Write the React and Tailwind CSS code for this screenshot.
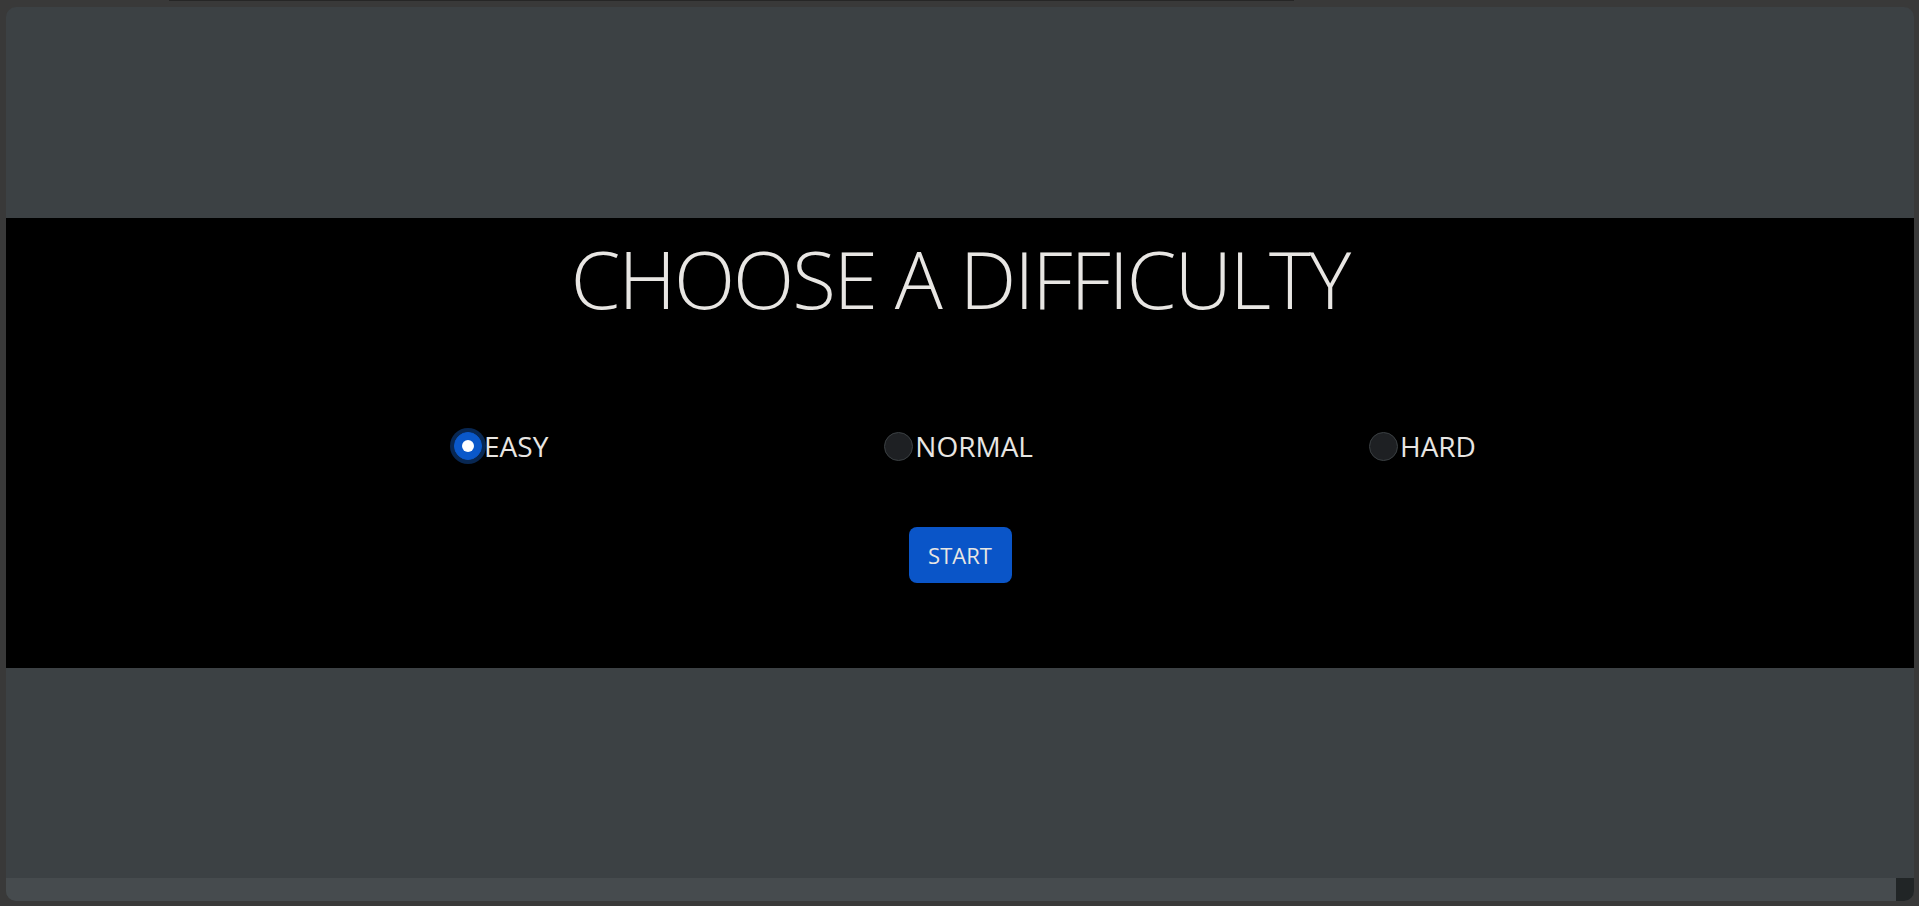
import { useState } from 'react';

const levels = ['EASY', 'NORMAL', 'HARD'];

function Radio({ label, checked, onSelect }) {
  return (
    <label className="flex cursor-pointer items-center gap-[2px]" onClick={onSelect}>
      <span
        className={
          checked
            ? 'flex h-[28px] w-[28px] items-center justify-center rounded-full border border-[#0a58ca] bg-[#0a58ca] ring-4 ring-[#082752]'
            : 'h-[29px] w-[29px] rounded-full border border-[#3b4043] bg-[#1e2023]'
        }
      >
        {checked && <span className="h-[12px] w-[12px] rounded-full bg-white" />}
      </span>
      <span className="text-[28px] leading-[1.5] text-[#e8e6e3]">{label}</span>
    </label>
  );
}

export default function App() {
  const [level, setLevel] = useState('EASY');

  return (
    <div
      className="relative h-[906px] w-full overflow-hidden bg-[#393939] pt-[7px] pl-[6px]"
      style={{ fontFamily: '"Open Sans", "Noto Sans", sans-serif' }}
    >
      <div className="absolute left-[169px] top-0 h-px w-[1125px] bg-[#262626]" />

      <div className="flex h-[894px] w-[1908px] flex-col overflow-hidden rounded-[10px] bg-[#3c4144]">
        <div className="h-[211px]" />

        <section className="flex h-[450px] flex-col items-center bg-black pt-[12px]">
          <h1 className="text-[80px] font-light leading-[1.2] tracking-[-2px] text-[#e8e6e3]">
            CHOOSE A DIFFICULTY
          </h1>

          <div className="mt-[99px] flex items-center justify-center gap-[336px] pl-[10px]">
            {levels.map((l) => (
              <Radio key={l} label={l} checked={level === l} onSelect={() => setLevel(l)} />
            ))}
          </div>

          <button className="mt-[60px] h-[56px] w-[103px] rounded-[8px] bg-[#0a55c8] text-[22px] text-[#e8e6e3]">
            START
          </button>
        </section>

        <div className="flex-1" />

        <div className="flex h-[23px]">
          <div className="flex-1 bg-[#464b4e]" />
          <div className="w-[18px] bg-[#212526]" />
        </div>
      </div>
    </div>
  );
}
